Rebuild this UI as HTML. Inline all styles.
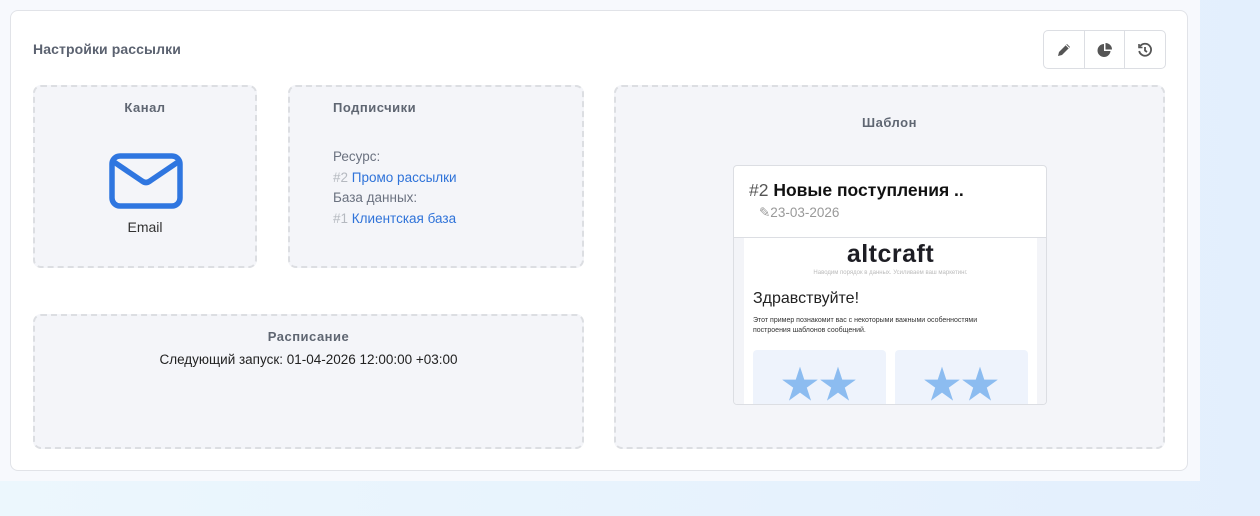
<!DOCTYPE html>
<html><head><meta charset="utf-8"><style>
*{box-sizing:border-box;margin:0;padding:0}
body{width:1260px;height:516px;overflow:hidden;background:linear-gradient(90deg,#ecf7fd,#e3effd);font-family:"Liberation Sans","Noto Sans CJK SC",sans-serif;position:relative}
.bg{position:absolute;left:0;top:0;width:1200px;height:481px;background:#f7f9fd}
.card{position:absolute;left:10px;top:10px;width:1178px;height:461px;background:#fff;border:1px solid #e1e3e8;border-radius:8px}
.title{position:absolute;left:33px;top:41px;font-size:14px;color:#5b6270;font-weight:bold;letter-spacing:0.1px}
.box{position:absolute;background:#f4f5f9;border:2px dashed #dcdee2;border-radius:8px}
.h{font-size:13px;font-weight:bold;color:#5f6672;text-align:center;letter-spacing:0.5px}
.btns{position:absolute;left:1043px;top:30px;width:123px;height:39px;border:1px solid #dcdee3;border-radius:5px;display:flex}
.btns div{flex:1;border-right:1px solid #dcdee3;display:flex;align-items:center;justify-content:center}
.btns div:last-child{border-right:none}
.sub{font-size:13.5px;color:#6b7280;line-height:20.5px}
.sub a{color:#2f73d9;text-decoration:none}
.sub i{font-style:normal;color:#b5b9c0}
</style></head><body>
<div class="bg"></div>
<div class="card"></div>
<div class="title">Настройки рассылки</div>
<div class="btns">
<div><svg width="16" height="16" viewBox="0 0 16 16"><path d="M11 2l3 3-8 8-4 1 1-4z" fill="#555"/><path d="M10 3l3 3" stroke="#fff" stroke-width="1"/></svg></div>
<div><svg width="16" height="16" viewBox="0 0 16 16"><path d="M7 2a6.5 6.5 0 1 0 6.5 7H7z" fill="#555"/><path d="M8.5 1v6.5H15A6.5 6.5 0 0 0 8.5 1z" fill="#555"/></svg></div>
<div><svg width="16" height="16" viewBox="0 0 16 16" fill="none" stroke="#555" stroke-width="1.8"><path d="M3 4.5A6 6 0 1 1 2.2 9"/><path d="M2 2v3.5h3.5" stroke-width="1.6"/><path d="M8 5v3.5l2 1.5"/></svg></div>
</div>
<div class="box" style="left:33px;top:85px;width:224px;height:183px">
<div class="h" style="margin-top:13px">Канал</div>
<svg style="position:absolute;left:74px;top:66px" width="74" height="56" viewBox="0 0 74 56"><rect x="3" y="3" width="68" height="50" rx="8" fill="none" stroke="#2f76e0" stroke-width="5.5"/><path d="M5 9l28 19q4 3 8 0l28-19" fill="none" stroke="#2f76e0" stroke-width="5.5"/></svg>
<div style="position:absolute;top:132px;width:100%;text-align:center;font-size:14px;color:#333">Email</div>
</div>
<div class="box" style="left:288px;top:85px;width:296px;height:183px">
<div class="h" style="margin-top:13px;text-align:left;padding-left:43px">Подписчики</div>
<div class="sub" style="position:absolute;left:43px;top:60px">Ресурс:<br><i>#2</i> <a>Промо рассылки</a><br>База данных:<br><i>#1</i> <a>Клиентская база</a></div>
</div>
<div class="box" style="left:33px;top:314px;width:551px;height:135px">
<div class="h" style="margin-top:13px">Расписание</div>
<div style="text-align:center;font-size:13.5px;color:#222;margin-top:8px">Следующий запуск: 01-04-2026 12:00:00 +03:00</div>
</div>
<div class="box" style="left:614px;top:85px;width:551px;height:364px">
<div class="h" style="margin-top:28px">Шаблон</div>
</div>
<div style="position:absolute;left:733px;top:165px;width:314px;height:240px;background:#fff;border:1px solid #dcdee3;border-radius:4px;overflow:hidden">
<div style="position:absolute;left:15px;top:14px;font-size:17.5px;color:#111;font-weight:bold"><span style="font-weight:normal;color:#555">#2</span> Новые поступления ..</div>
<div style="position:absolute;left:25px;top:39px;font-size:13.5px;color:#999">✎23-03-2026</div>
<div style="position:absolute;left:0;top:71px;width:100%;height:1px;background:#dcdee3"></div>
<div style="position:absolute;left:0;top:72px;width:100%;height:170px;background:#f3f4f8">
<div style="position:absolute;left:10px;top:0;width:293px;height:170px;background:#fff">
<div style="text-align:center;font-size:25px;color:#1d1d24;margin-top:2px;font-weight:bold;letter-spacing:0.5px">altcraft</div>
<div style="text-align:center;font-size:6px;color:#bbb;margin-top:1px">Наводим порядок в данных. Усиливаем ваш маркетинг.</div>
<div style="margin:14px 0 0 9px;font-size:16px;color:#222">Здравствуйте!</div>
<div style="margin:8px 0 0 9px;font-size:7px;color:#333;line-height:10px">Этот пример познакомит вас с некоторыми важными особенностями<br>построения шаблонов сообщений.</div>
<div style="position:absolute;left:9px;top:112px;width:133px;height:60px;background:#eef3fc;border-radius:4px"><div style="position:absolute;left:28px;top:16px;font-size:38px;color:#8cbcf0;line-height:40px">★★</div></div>
<div style="position:absolute;left:151px;top:112px;width:133px;height:60px;background:#eef3fc;border-radius:4px"><div style="position:absolute;left:28px;top:16px;font-size:38px;color:#8cbcf0;line-height:40px">★★</div></div>
</div></div>
</div>
</body></html>
